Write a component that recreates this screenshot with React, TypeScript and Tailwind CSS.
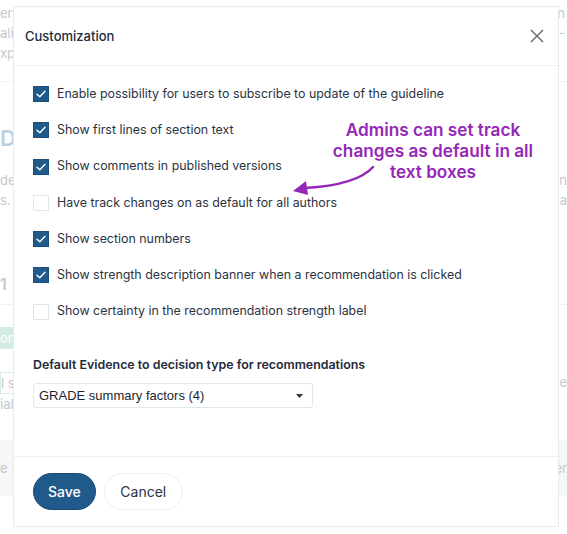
import React from 'react';

const OPTIONS = [
  { label: 'Enable possibility for users to subscribe to update of the guideline', checked: true },
  { label: 'Show first lines of section text', checked: true },
  { label: 'Show comments in published versions', checked: true },
  { label: 'Have track changes on as default for all authors', checked: false },
  { label: 'Show section numbers', checked: true },
  { label: 'Show strength description banner when a recommendation is clicked', checked: true },
  { label: 'Show certainty in the recommendation strength label', checked: false },
];

const Checkbox: React.FC<{ checked: boolean }> = ({ checked }) =>
  checked ? (
    <span className="w-4 h-4 shrink-0 bg-[#1f5a8b] border border-[#1a4d78] flex items-center justify-center">
      <svg width="10" height="8" viewBox="0 0 10 8" fill="none">
        <path d="M1 4.2 L3.8 6.8 L9 1.2" stroke="white" strokeWidth="1.4" strokeLinecap="round" strokeLinejoin="round" />
      </svg>
    </span>
  ) : (
    <span className="w-4 h-4 shrink-0 bg-white border border-[#e2e5ea]" />
  );

const App: React.FC = () => {
  return (
    <div className="relative w-[567px] h-[534px] overflow-hidden bg-white font-['Inter',sans-serif]">
      {/* ===== faded page behind the modal ===== */}
      <div className="flex flex-col text-[#c4c8ce] text-[13px]">
        <div className="flex justify-between pt-[3px] leading-[20px]">
          <div className="flex flex-col"><span>er</span><span>ali</span><span>xp</span></div>
          <div className="flex flex-col pr-[2px] text-right"><span>n</span><span>5-</span></div>
        </div>
        <div className="mt-[18px] border-t border-[#f0f1f3]" />
        <div className="mt-[42px] text-[22px] font-semibold text-[#bcd0e2] leading-[28px]">Do</div>
        <div className="flex justify-between mt-[18px] leading-[20px]">
          <div className="flex flex-col"><span>de</span><span>s.</span></div>
          <div className="flex flex-col text-right"><span>in</span><span>a</span></div>
        </div>
        <div className="mt-[64px] text-[16px] font-semibold leading-[20px]">1</div>
        <div className="mt-[10px] border-t border-[#f0f1f3]" />
        <div className="mt-[22px] w-[40px] h-[22px] bg-[#d3ebe4] text-white leading-[22px]">on</div>
        <div className="flex justify-between mt-[23px] leading-[20px]">
          <div className="flex flex-col"><span className="border border-[#d8ece6] w-[40px]">l s</span><span>ial</span></div>
          <span className="text-right">he</span>
        </div>
        <div className="mt-[26px] h-[56px] bg-[#f6f7f8] flex justify-between items-center leading-[20px]">
          <span>e (</span><span>er</span>
        </div>
      </div>

      {/* ===== modal ===== */}
      <div className="absolute left-[13px] top-[6px] w-[546px] h-[521px] bg-white border border-[#e8eaed] flex flex-col">
        <div className="h-[59px] flex items-center justify-between pl-[11px] pr-[14px] border-b border-[#eceef1] shrink-0">
          <span className="text-[13px] font-medium text-[#1c2b3f] pt-[1px]">Customization</span>
          <svg width="14" height="14" viewBox="0 0 14 14" fill="none">
            <path d="M1 1 L13 13 M13 1 L1 13" stroke="#6b6f75" strokeWidth="1.5" />
          </svg>
        </div>

        <div className="relative flex-1 flex flex-col pl-[19px] pt-[20px]">
          <div className="flex flex-col gap-[20.3px]">
            {OPTIONS.map((o) => (
              <label key={o.label} className="flex items-center gap-[8px] h-4 text-[12.4px] text-[#2a3342]">
                <Checkbox checked={o.checked} />
                <span>{o.label}</span>
              </label>
            ))}
          </div>

          <div className="mt-[36px] text-[12.4px] font-semibold text-[#1f2a3a]">
            Default Evidence to decision type for recommendations
          </div>
          <div className="mt-[9px] w-[280px] h-[25px] border border-[#e3e6ea] rounded-[3px] flex items-center justify-between pl-[5px] pr-[9px] font-['Liberation_Sans',sans-serif] text-[13px] text-[#1f2530]">
            <span>GRADE summary factors (4)</span>
            <svg width="7" height="4" viewBox="0 0 7 4"><path d="M0 0 L7 0 L3.5 4 Z" fill="#333" /></svg>
          </div>

          {/* annotation */}
          <div className="absolute left-[305px] top-[53px] w-[228px] text-center text-[17.2px] leading-[21px] font-semibold text-[#9527b8]">
            Admins can set track changes as default in all text boxes
          </div>
          <svg className="absolute left-[271px] top-[93px]" width="95" height="40" viewBox="0 0 95 40" fill="none">
            <path d="M88 8 Q 72 26 20 29" stroke="#9527b8" strokeWidth="2.5" fill="none" strokeLinecap="round" />
            <path d="M8 32 L21 22 L23 36 Z" fill="#9527b8" />
          </svg>
        </div>

        <div className="h-[70px] border-t border-[#eceef1] flex items-center gap-[8px] pl-[19px] shrink-0">
          <button className="h-[37px] px-[14px] rounded-full bg-[#1f5a8b] border border-[#174a75] text-white text-[14px] font-medium">
            Save
          </button>
          <button className="h-[37px] px-[14px] w-[79px] rounded-full bg-white border border-[#eceef1] text-[#2a3342] text-[14px]">
            Cancel
          </button>
        </div>
      </div>
    </div>
  );
};

export default App;
